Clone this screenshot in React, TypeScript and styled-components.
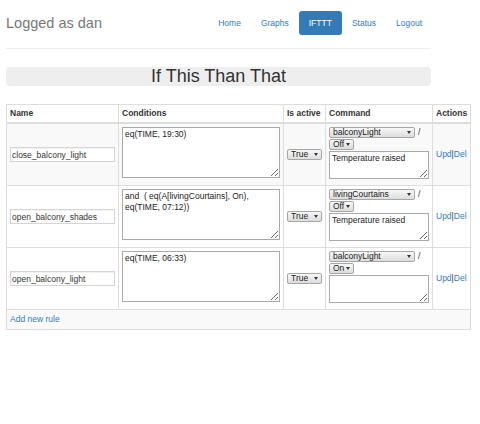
import React from 'react';
import styled, { createGlobalStyle } from 'styled-components';

const Global = createGlobalStyle`
  html, body { margin: 0; padding: 0; background: #fff; }
  body { font-family: "Liberation Sans", Arial, Helvetica, sans-serif; color: #333; }
`;

const Page = styled.div`
  padding-left: 6px;
`;

const Header = styled.header`
  width: 425px;
  display: flex;
  justify-content: space-between;
  align-items: center;
  padding-top: 10px;
  padding-bottom: 13px;
  border-bottom: 1px solid #eeeeee;
`;

const Brand = styled.div`
  font-size: 14.5px;
  color: #777;
  line-height: 24px;
  padding-top: 1px;
`;

const Nav = styled.nav`
  display: flex;
  margin-right: -1px;
`;

const NavItem = styled.a<{ $active?: boolean }>`
  display: block;
  height: 24px;
  line-height: 24px;
  padding: 0 10px;
  font-size: 8.5px;
  border-radius: 3px;
  text-decoration: none;
  color: ${p => (p.$active ? '#fff' : '#337ab7')};
  background: ${p => (p.$active ? '#337ab7' : 'transparent')};
`;

const Title = styled.h1`
  margin: 18px 0 0 0;
  width: 425px;
  height: 19px;
  background: #eee;
  border-radius: 4px;
  text-align: center;
  font-size: 18px;
  line-height: 19px;
  font-weight: normal;
  color: #333;
`;

const Table = styled.table`
  margin-top: 18px;
  border-collapse: collapse;
  table-layout: fixed;
  width: 464px;
  font-size: 8.5px;
  color: #333;
`;

const Th = styled.th`
  border: 1px solid #ddd;
  border-bottom: 2px solid #ddd;
  text-align: left;
  padding: 3px;
  line-height: 11px;
  font-weight: bold;
  color: #333;
`;

const Tr = styled.tr<{ $striped?: boolean }>`
  background: ${p => (p.$striped ? '#f9f9f9' : '#fff')};
`;

const Td = styled.td<{ $top?: number }>`
  border: 1px solid #ddd;
  height: 55px;
  padding: ${p => (p.$top !== undefined ? `${p.$top}px 3px 3px 3px` : '3px')};
  vertical-align: ${p => (p.$top !== undefined ? 'top' : 'middle')};
  line-height: 11px;
`;

const AddTd = styled.td`
  border: 1px solid #ddd;
  padding: 3px 3px;
  line-height: 13px;
  background: #f9f9f9;
`;

const NameInput = styled.input`
  box-sizing: border-box;
  width: 100%;
  height: 15px;
  margin: 0;
  padding: 0 1px;
  border: 1px solid #d5d5d5;
  box-shadow: inset 0 1px 1px rgba(0, 0, 0, 0.06);
  font-family: "Liberation Sans", Arial, sans-serif;
  font-size: 8.5px;
  color: #333;
  background: #fff;
  display: block;
`;

const Area = styled.textarea<{ $h: number }>`
  box-sizing: border-box;
  display: block;
  width: 100%;
  height: ${p => p.$h}px;
  margin: 0;
  padding: 1px 2px;
  border: 1px solid #a9a9a9;
  font-family: "Liberation Sans", Arial, sans-serif;
  font-size: 8.5px;
  line-height: 11px;
  color: #222;
  background: #fff;
  overflow: hidden;
`;

const SelectWrap = styled.span<{ $w: number }>`
  position: relative;
  display: inline-block;
  flex: none;
  width: ${p => p.$w}px;
  height: 11px;
  vertical-align: top;
`;

const Select = styled.select`
  appearance: none;
  -webkit-appearance: none;
  box-sizing: border-box;
  width: 100%;
  height: 11px;
  margin: 0;
  padding: 0 0 0 3px;
  border: 1px solid #a6a6a6;
  border-radius: 2px;
  background: linear-gradient(#f7f7f7, #dcdcdc);
  font-family: "Liberation Sans", Arial, sans-serif;
  font-size: 8.5px;
  line-height: 9px;
  color: #222;
  display: block;
`;

const Arrow = styled.span`
  position: absolute;
  right: 4px;
  top: 4px;
  width: 0;
  height: 0;
  border-left: 2px solid transparent;
  border-right: 2px solid transparent;
  border-top: 3px solid #333;
  pointer-events: none;
`;

const CmdLine = styled.div`
  height: 11px;
  margin-bottom: 1px;
  display: flex;
  align-items: flex-start;
  line-height: 10px;
`;

const Slash = styled.span`
  margin-left: 3px;
  color: #333;
`;

const ActiveCell = styled.div`
  display: flex;
  justify-content: center;
`;

const Link = styled.a`
  color: #337ab7;
  text-decoration: none;
`;

const Pipe = styled.span`
  color: #333;
`;

type Rule = {
  name: string;
  cond: string;
  device: string;
  state: string;
  msg: string;
  striped: boolean;
};

const rules: Rule[] = [
  { name: 'close_balcony_light', cond: 'eq(TIME, 19:30)', device: 'balconyLight', state: 'Off', msg: 'Temperature raised', striped: true },
  { name: 'open_balcony_shades', cond: 'and  ( eq(A[livingCourtains], On),\neq(TIME, 07:12))', device: 'livingCourtains', state: 'Off', msg: 'Temperature raised', striped: false },
  { name: 'open_balcony_light', cond: 'eq(TIME, 06:33)', device: 'balconyLight', state: 'On', msg: '', striped: false },
];

function FakeSelect({ w, value }: { w: number; value: string }) {
  return (
    <SelectWrap $w={w}>
      <Select defaultValue={value}>
        <option value={value}>{value}</option>
      </Select>
      <Arrow />
    </SelectWrap>
  );
}

export default function App() {
  return (
    <>
      <Global />
      <Page>
        <Header>
          <Brand>Logged as dan</Brand>
          <Nav>
            <NavItem>Home</NavItem>
            <NavItem>Graphs</NavItem>
            <NavItem $active>IFTTT</NavItem>
            <NavItem>Status</NavItem>
            <NavItem>Logout</NavItem>
          </Nav>
        </Header>
        <Title>If This Than That</Title>
        <Table>
          <colgroup>
            <col style={{ width: 112 }} />
            <col style={{ width: 165 }} />
            <col style={{ width: 42 }} />
            <col style={{ width: 107 }} />
            <col style={{ width: 38 }} />
          </colgroup>
          <thead>
            <tr>
              <Th>Name</Th>
              <Th>Conditions</Th>
              <Th>Is active</Th>
              <Th>Command</Th>
              <Th>Actions</Th>
            </tr>
          </thead>
          <tbody>
            {rules.map(r => (
              <Tr key={r.name} $striped={r.striped}>
                <Td>
                  <NameInput defaultValue={r.name} />
                </Td>
                <Td $top={3}>
                  <Area $h={51} defaultValue={r.cond} />
                </Td>
                <Td>
                  <ActiveCell>
                    <FakeSelect w={35} value="True" />
                  </ActiveCell>
                </Td>
                <Td $top={3}>
                  <CmdLine>
                    <FakeSelect w={86} value={r.device} />
                    <Slash>/</Slash>
                  </CmdLine>
                  <CmdLine>
                    <FakeSelect w={25} value={r.state} />
                  </CmdLine>
                  <Area $h={28} defaultValue={r.msg} />
                </Td>
                <Td>
                  <Link>Upd</Link>
                  <Pipe>|</Pipe>
                  <Link>Del</Link>
                </Td>
              </Tr>
            ))}
            <tr>
              <AddTd colSpan={5}>
                <Link>Add new rule</Link>
              </AddTd>
            </tr>
          </tbody>
        </Table>
      </Page>
    </>
  );
}
